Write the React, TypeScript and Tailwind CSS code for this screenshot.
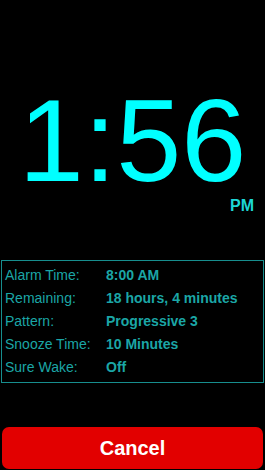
const rows = [
  { label: "Alarm Time:", value: "8:00 AM" },
  { label: "Remaining:", value: "18 hours, 4 minutes" },
  { label: "Pattern:", value: "Progressive 3" },
  { label: "Snooze Time:", value: "10 Minutes" },
  { label: "Sure Wake:", value: "Off" },
];

const App = () => {
  return (
    <div className="w-[265px] h-[470px] bg-black flex flex-col overflow-hidden font-['Liberation_Sans',Arial,sans-serif]">
      <div className="shrink-0 pt-[83px] h-[198px] text-center text-[117px] leading-[115px] text-[#00ffff]">
        1:56
      </div>
      <div className="shrink-0 pr-[11px] text-right text-[16px] leading-4 font-bold text-[#1dd6d6]">
        PM
      </div>

      <div className="shrink-0 mt-[46px] mx-[1px] border border-[#178e8e] pt-[3px] pb-[3px] pl-[3px]">
        {rows.map((row) => (
          <div key={row.label} className="flex h-[23px] items-center text-[14px] leading-[23px] text-[#1ba6a6]">
            <span className="w-[101px] shrink-0">{row.label}</span>
            <span className="font-bold">{row.value}</span>
          </div>
        ))}
      </div>

      <button className="shrink-0 mt-[44px] mx-[2px] h-[42px] rounded-[7px] bg-[#e20000] text-white text-[20px] leading-[42px] font-bold">
        Cancel
      </button>
    </div>
  );
};

export default App;
